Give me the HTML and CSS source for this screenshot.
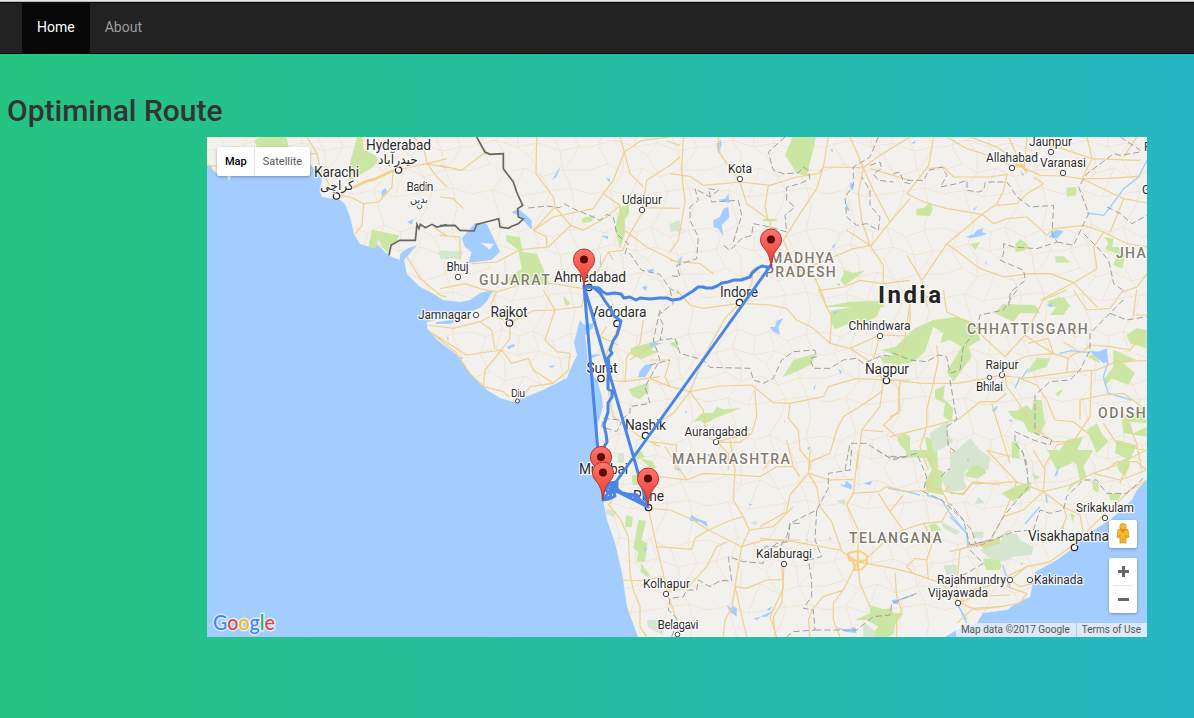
FILE: index.html
```html
<!DOCTYPE html>
<html lang="en">
<head>
<meta charset="utf-8">
<title>Optiminal Route</title>
<link rel="stylesheet" href="styles.css">
</head>
<body>
<nav class="navbar">
  <a class="nav-link active" href="#">Home</a>
  <a class="nav-link" href="#">About</a>
</nav>
<main class="content">
  <h2 class="title">Optiminal Route</h2>
  <div class="map">
    <svg class="map-canvas" viewBox="207 137 940 500" width="940" height="500">
      <defs>
        <pattern id="lanes" width="118" height="104" patternUnits="userSpaceOnUse">
          <path class="lane" d="M0 20L14 25 30 17 47 24 61 19 80 29 98 22 118 20M0 66L18 60 33 69 52 64 70 73 91 66 118 66M25 0L30 17 24 36 33 50 33 69 20 86 25 104M73 0L61 19 67 39 58 52 70 73 78 87 73 104M103 0L98 22 107 43 100 55 91 66 99 84 103 104M0 43L24 36 45 43 67 39 88 47 107 43 118 43M0 90L20 86 40 93 52 64M40 93L60 90 78 87 99 84 118 90M47 24L45 43 58 52 M80 29L88 47 91 66M14 25L8 42 18 60"/>
        </pattern>
        <linearGradient id="pinFill" x1="0" y1="0" x2="0" y2="1"><stop offset="0" stop-color="#ff766a"/><stop offset="1" stop-color="#e8392f"/></linearGradient>
        <g id="pin">
          <path d="M0 0C-1-10-3-14-7-19C-9.500-22-10.500-24-10.500-27.500A10.500 10.500 0 0 1 10.500-27.500C10.500-24 9.500-22 7-19C3-14 1-10 0 0Z" fill="url(#pinFill)" stroke="#b8322b" stroke-width="1"/>
          <circle cy="-27.500" r="4" fill="#590c08"/>
        </g>
        <path id="landShape" d="M207 137V165L215 172 227 176 229 181 231 176 270 170 300 168 310 164 315 170 322 177 320 192 322 197 334 199 340 200 345 204 350 217 354 234 360 244 370 247 378 245 387 254 392 257 400 260 406 253 417 245 411 252 404 260 407 274 420 287 432 293 443 300 460 302 470 300 480 293 493 290 487 301 480 308 467 313 450 315 437 320 427 322 427 328 437 340 457 355 470 373 487 390 500 398 513 402 523 398 543 390 567 378 570 370 577 355 574 343 578 327 580 320 584 325 593 323 593 328 585 335 587 350 588 367 597 380 602 397 603 407 598 423 597 437 598 460 603 500 607 520 615 543 622 573 627 607 638 637H945L960 628 977 623 983 613 1007 610 1017 603 1030 597 1033 583 1035 572 1057 560 1075 547 1083 537 1110 520 1132 500 1137 490 1147 479V137Z"/>
      </defs>
      <rect class="sea" x="207" y="137" width="940" height="500"/>
      <use href="#landShape" fill="#f2f1ed"/>
      <use href="#landShape" fill="url(#lanes)"/>

      <!-- Sindh and the Indus delta -->
      <g transform="translate(207 137) scale(.33333)">
        <path class="park" d="M142 12L160 0H238L245 30H150ZM450 0L468 0 467 35 505 55 515 70 495 92 430 130 420 112ZM495 278L575 295 570 318 545 325 545 350 525 330 515 305 505 335 484 330Z"/>
        <path class="park pale" d="M690 345H720V365L700 358Z"/>
        <path class="water" d="M525 160l12-6 3 12-16 14ZM600 255l20-8-6 16ZM184 38l22-4-8 10ZM0 90l12-6 6 20-14 2ZM580 350l20-15 30-10-20 18-22 28-10 5Z"/>
        <path class="road" d="M300 0L330 50 340 95 365 140 388 175 430 180 470 200 515 195 555 150 558 100M470 200L465 265 445 290M575 98L610 90 660 80 720 92M620 0L650 30 660 80 690 120 720 150M0 85L30 88M300 50L330 50M720 65L660 80M720 298L680 270M600 360L640 425 700 475 720 480"/>
        <path class="highway" d="M400 170L480 132 500 128 560 100"/>
        <path class="state-line dark" d="M720 263L690 270 675 262 655 272 640 262 636 275 630 262 625 310H578L552 325 546 355"/>
      </g>

      <!-- Gujarat north and Udaipur -->
      <g transform="translate(440 137) scale(.33333)">
        <path class="water" d="M65 305L105 258 140 260 180 345 155 368 85 378 95 345 75 330ZM235 215L275 250V278L240 240 215 225ZM335 130l28-45-14 34ZM245 362l15 15-8 12-10-14ZM484 298l20-2v10ZM498 122l12 4v12ZM605 450l18-4-6 16ZM620 398l22-2-6 14ZM481 345l4 50-6-16Z"/>
        <path class="land" d="M123 318l38 2-12 18Z"/>
        <path class="park" d="M198 295L240 300 248 345 290 350 330 442H180L245 395 235 340 200 312ZM425 244l42-10-14 20-26 4ZM540 210L567 205V230L555 245V290L540 335 525 275ZM370 480l20 20-12 8Z"/>
        <path class="park pale" d="M0 340L70 345 60 365H0ZM685 262L720 250V290Z"/>
        <path class="road" d="M290 0L288 110 340 180 345 210 392 265 325 330 240 338 170 375 95 380M0 295L60 300V370M0 85L65 100 130 50 178 50M0 180L40 185 70 215M345 210L280 280 320 300V330M392 265L430 280 500 240 540 205 490 170 460 215 340 240 280 280M540 0L553 45 520 130 490 170M553 45L605 10 690 0M720 60L690 85 620 130 608 212 720 214M540 205L548 275 620 330 720 380M448 450L475 400 505 345 548 340 570 290 608 225M430 455L340 440 250 440 170 465 150 510M553 45L570 110 610 150M720 25L680 12M0 455L75 440 120 455 170 465M520 370L505 345"/>
        <path class="state-line dark" d="M110 0L135 45 150 52 190 50V95L220 135 230 165 248 205 233 215 235 240 250 246 235 260 215 268 205 274 180 270 176 245 110 262 102 282 60 280 45 265 0 266"/>
        <path class="state-line" d="M265 213L320 207 360 212 372 200 400 215 460 240 480 250 500 232 520 240 530 290 540 300 565 320 555 350 570 350 605 400 660 412 690 455 720 470"/>
      </g>

      <!-- Kota and Madhya Pradesh -->
      <g transform="translate(670 137) scale(.33333)">
        <path class="park" d="M368 0H438L412 110 420 120 380 108 345 55ZM515 380L520 398 550 408 585 400 560 420 525 445 510 430 522 410ZM455 510L540 494 630 491 645 510ZM280 245l40 0v8h-40Z"/>
        <path class="park pale" d="M0 265L20 250 40 280 0 285Z"/>
        <path class="water" d="M130 250L150 240 160 215 175 210 178 240 155 265 160 298 145 275 130 270ZM143 188L165 186 175 170 178 198ZM140 20L152 8 155 24 145 50ZM526 192l14 30-10-3ZM540 138l10 2v18h-8ZM480 38l8-3v10ZM484 330l12-12-4 16ZM428 380l10 0-5 8ZM25 370l12-15-8 36ZM500 440l10 0-2 8Z"/>
        <path class="road" d="M40 0L35 105 45 195 25 310 0 345M0 110L60 118 100 145 160 140 210 135 300 145 380 120 445 110 460 90 580 92 630 55 720 0M145 0L150 50 210 135 230 200 300 250 303 300 340 310 380 395 430 415 455 465 470 510M475 0L460 90 440 155 390 230 340 310M295 145L285 210 295 250M540 0L580 92 565 170 575 250 600 325 640 385V440M580 92L610 160 660 255 720 185M660 255L605 325 550 335 430 385M600 325L530 280M600 95L720 130M0 370L90 380 130 410M215 495L245 440 250 395 300 385M435 420L450 460 520 450 570 430 640 440 720 430"/>
        <path class="state-line" d="M345 0L295 45 310 100 340 110 385 108 400 90 415 100 420 125 390 140 350 150 350 190 375 210 345 235 350 285 300 270 250 260 245 295 215 305 180 340 155 320M190 315L215 235 205 190 125 195 115 155 145 160 120 180 75 155 85 190 60 210 60 250 85 300 80 365 20 385 30 420 0 415M625 0L600 60 550 90 550 145 525 180 530 240 560 265 590 260 625 280 630 240 600 205V160L575 120M600 85L630 75 635 95 610 110 625 130 670 135M670 110L690 105 700 135 720 140"/>
      </g>

      <!-- Allahabad and Varanasi -->
      <g transform="translate(907 137) scale(.33333)">
        <path class="park" d="M28 215l22-2 20-18 8 22-10 20-40-2ZM478 152l30-2v25l-28 4ZM190 320l30-5-15 24ZM325 320l15-14 22 17-5 15-32 8ZM445 358l25 0 18 18-42 1ZM590 300L620 305 615 330 635 330 655 355 645 395 620 385 630 350 595 335 605 318ZM420 500L470 480 490 510H425ZM305 502L385 504 386 510H305Z"/>
        <path class="water" d="M175 300L200 292 210 280 230 272 225 285 240 290 220 298 190 303ZM425 300L445 278 470 282 450 305ZM340 100l12 14-6 2ZM235 368l5 16-4-4ZM196 218l16-12-8 12ZM12 18l16-8-6 10Z"/>
        <path class="river" d="M720 70L695 120 650 155 610 210 590 235 540 228"/>
        <path class="road" d="M120 0L180 35 260 60 315 88 345 90 400 115 468 117 520 125 590 125 700 118M80 0L65 85 0 170 50 195 120 215 225 232 260 260 300 245 360 240 420 295 440 275 530 265 590 285 660 320 720 330M225 232L180 270 120 320 45 430 60 510M120 320L220 395 290 420 370 410 430 410 500 437 570 395M570 395L560 330 590 285M500 437L400 490M65 95L110 90 140 120 250 120 300 112 290 160 270 200 225 232M270 205L330 200 360 170 410 140M190 0L270 30 350 85M305 0L340 80M395 0L420 20 555 65 700 70M540 0L555 65 525 125 650 185 720 198M650 185L610 285M650 60L690 0M360 0L352 90M0 355L45 430M500 437L570 510M645 465L690 450 720 410M380 120L410 140"/>
        <path class="highway" d="M325 82L345 88 360 103"/>
        <path class="state-line" d="M0 130L50 130 65 100 105 90 120 115 100 150 150 140 180 130 180 160 215 165 230 160 235 135 300 135 330 180 370 210 440 205 435 290 450 315 390 335 320 330 290 320 290 350 280 370 350 400 355 430 310 465 305 510M450 315L500 325 530 260 545 230 515 150 540 110 620 50 640 55 700 45M640 0L700 40M530 290L570 330 605 370 620 440 655 465M600 210L640 230 675 260 720 235"/>
      </g>

      <!-- Saurashtra and the Gulf of Khambhat -->
      <g transform="translate(400 290) scale(.33333)">
        <path class="water" d="M107 97L190 85 150 102H108ZM320 170l22-8 4 6-20 10ZM175 200l14 2-4 8ZM445 228l22-2-12 8ZM570 195L605 192 575 205ZM715 262L718 245 735 225 760 222 735 262ZM140 140l5 0v16Z"/>
        <path class="park" d="M490 18L510 40 495 45ZM692 175L770 152 750 180 775 185 725 208 695 195ZM685 298L745 278V305L718 328 700 320ZM690 490l30-10 15 20-20 8Z"/>
        <path class="park pale" d="M653 490H672V515H655Z"/>
        <path class="road" d="M80 105L160 115 240 95 280 75 330 100 330 145 305 180 200 195 90 125M240 95L275 120 285 175M250 290L255 240 305 180 335 220 385 205 400 240 460 280 505 240 510 190 470 185 435 150 465 60 400 62 330 100M465 60L545 50 555 5M430 0L465 60M90 125L170 190 210 250 250 290 310 305 325 318 370 318 390 290 460 280M600 265L625 270 675 275 780 260M675 275L680 200 720 160 730 90M660 100L620 190 620 270 632 345 640 380 720 440 780 470M620 110L600 140 655 165M780 150L690 210"/>
        <path class="state-line" d="M780 60L760 150 780 210 735 290 750 340 690 350 690 370 660 390 610 385 605 410 650 425 665 395"/>
      </g>

      <!-- Maharashtra and southern Madhya Pradesh -->
      <g transform="translate(650 290) scale(.33333)">
        <path class="park" d="M542 62L700 35 680 80 660 90 585 105 555 118 540 90ZM398 262L430 210 500 190 480 225 450 240ZM130 395L155 370 190 368 200 350 220 358 275 354 195 385 165 402 150 392ZM692 180L740 170 780 150V220H700L690 200 740 195ZM740 440L765 430 780 440V495L750 465ZM0 155L22 165 0 182ZM58 160L85 152V180Z"/>
        <path class="water" d="M360 112L375 110 380 92 400 85 385 112 390 135 370 125ZM565 238l10 4-3 12ZM490 295l8-12-4 16ZM550 65l18-2-14 10ZM470 474l14-6-8 12ZM170 492l20 0-4 18ZM402 388l3 12-3-4ZM104 362l8 4-5 4ZM0 160L40 158 0 172Z"/>
        <path class="road" d="M80 0L120 45 160 55 268 40 360 45 410 55 440 90 490 115 540 160 600 175 660 215 700 270 780 270M505 0L545 80 540 160M600 175L690 135 780 138M690 135L670 210M268 40L225 85 165 195 120 305 160 360 170 440 200 455 235 490V540M0 265L60 290 120 305 210 288 305 285 370 338 420 340 520 320 535 290 620 265 700 270M315 300L320 380 305 430 200 455M420 340L415 385 445 420 450 480 480 515 540 490 560 420 580 380 660 330 700 300M700 270L690 350 635 420 620 540M745 290L750 360 700 405 740 440M635 420L700 425M0 455L80 465 75 540M0 210L60 210 45 260 60 290M120 305L70 370 30 395M200 457L270 457 305 430M480 515V540M340 540L360 510 420 510M780 180V0"/>
        <path class="state-line" d="M60 0L70 40 25 75 40 105 30 150 75 145 90 190 160 210 180 232 300 235 310 270 340 280 370 265 395 210 430 185 495 180 500 200 480 205 490 235 540 235 580 210 620 205 640 220 700 195 780 210M0 225L60 210M585 540L600 460 650 460 720 505 780 500"/>
      </g>

      <!-- Chhattisgarh and Odisha -->
      <g transform="translate(890 290) scale(.33333)">
        <path class="park" d="M0 185L75 115 130 90 200 80 260 100 270 150 235 170 245 200 190 275 170 245 215 170 180 150 150 160 160 130 130 110 105 185 70 215 20 225ZM315 70L340 40 365 50 440 50 450 70 390 70 370 95ZM470 35L510 20 540 45 520 75 480 75 500 50ZM410 250L440 205 480 205 470 230ZM135 300L165 285 160 325 190 355 185 395 160 380 165 340 135 325ZM352 362L380 362 410 345 425 360 430 330 455 330 465 400 450 435 415 425 400 395 370 385ZM495 310L520 297 505 320ZM670 180L740 210 700 220 735 250 715 285 665 265 645 290 640 270 670 230ZM710 135L740 115 770 120V175L720 160ZM695 380L720 375 765 345 770 400 720 395 730 430 770 410V440L700 430ZM590 420L620 400 635 430 655 455 620 490ZM510 480L530 450 580 440 545 520 500 540 480 500ZM680 450L740 465 720 510 675 490ZM365 455L385 455 390 505 365 505ZM105 440L140 455 145 540 115 500ZM590 200l30-10 10 30Z"/>
        <path class="park pale" d="M120 430L180 390 170 430 190 455 130 490ZM180 490L200 480 240 445 270 480 300 500 295 540H200L235 500Z"/>
        <path class="water" d="M598 182L625 185 650 175 655 215 640 220ZM305 360l20-15-12 25ZM355 392l10-4v8ZM105 15l12 6 0 8ZM470 45l18-6-4 12Z"/>
        <path class="river" d="M508 190L545 182 600 188M655 215L640 260 655 310 725 330M390 260L375 295M415 235L395 265"/>
        <path class="road" d="M0 270L100 280 200 280 290 265 335 255 400 265 550 245 620 240 680 215 770 212M160 0L170 65 240 100 290 150 345 200 405 135 460 30 530 0M405 135L440 160 490 190 535 205 530 245M410 198L490 190M335 255L350 225 410 198M345 255L350 290 380 330 430 410 490 455 550 455 600 380 605 240M350 310L320 335 270 335 210 385 120 410 0 440M305 340L320 390 360 520M390 265L440 285 470 330 495 390 550 395 600 435M140 165L145 210 130 280 110 360V410L90 470 115 540M580 185L600 165 660 170 720 180 760 130M535 205L555 190 580 185M65 0L40 180 0 240M30 270L25 370 0 380M640 400L680 460 760 480M570 390L570 330 640 315 700 310 770 360M650 540L680 515 740 515 770 540M740 0L730 75 770 75M550 0L590 60 660 55 700 0M490 190L475 145 415 160M560 180L520 155M700 370L740 460 755 540M550 455L500 465 460 535M290 480L360 500"/>
        <path class="state-line" d="M380 0L340 60 270 75 260 120 220 170 210 240 180 250 170 200 145 195 110 215 60 210 0 185M180 270L190 330 200 390 170 410 175 470 235 510 200 540M700 30L650 80 600 130 600 180 570 240 540 270 480 275 435 315 435 430 485 450 480 465 430 450 375 425 375 460 400 490 410 540M660 70L710 90 770 80M0 500L90 500"/>
      </g>

      <!-- Konkan and northern Karnataka -->
      <g transform="translate(560 440) scale(.33333)">
        <path class="park" d="M198 225L218 230 215 262 195 262ZM235 240L258 242 245 300 262 310 255 365H230L235 335 220 325ZM243 368L268 405 262 412 242 395ZM215 105h18v30h-15ZM240 55l35 8 15 20-15 5Z"/>
        <path class="park pale" d="M175 42h16v26h-18ZM140 205l30 10-8 15-25-8ZM260 540l40 0 10 45-45-22ZM568 248l24-5-4 12Z"/>
        <path class="water" d="M388 238L395 225 410 235 440 245 443 262 420 245 390 242ZM500 495L512 505 520 498 530 505V530L510 515ZM580 535l22-5-10 10ZM620 508l18-10-10 14ZM345 82l20 6-12 4ZM565 190l14 4-10 3ZM250 325l12-3-6 14Z"/>
        <path class="road" d="M145 195L180 235 205 290 210 400 220 450 240 500V560L260 590M265 205L275 250 290 320 310 400 320 455 340 510 355 560M265 205L330 210 400 240 445 270 545 320 610 300 720 300M290 320L395 328 405 295 445 270 515 240 550 230 520 180 525 90 510 0M550 230L568 270 545 320 525 440 515 505 495 540 490 590M320 455L380 445 440 380 470 320 500 305M525 440L560 445 620 420 670 418 665 490 640 530 645 590M300 110L380 120 430 100 530 105 600 110 650 80 700 80M190 420L240 422 310 410M165 170L145 195 160 210M315 20L360 90 380 120M680 0L700 80 720 110M560 590L525 440M568 270L640 260 700 200M670 418L672 370"/>
        <path class="state-line" d="M335 590L355 540 325 510 330 475 370 470 380 450 410 450 415 420 450 440 480 422 515 422 505 350 550 365 610 370 615 320 660 320 680 290 690 250 720 250"/>
      </g>

      <!-- Telangana -->
      <g transform="translate(760 450) scale(.33333)">
        <path class="park" d="M435 0H500L530 30 525 55 550 65 545 110 550 135 500 125 495 95 515 60 500 25 440 20ZM615 70L650 50 680 70 640 85ZM505 225l20-5 20 20-30 5ZM285 510L330 490V465L370 478 395 475 400 490 430 490 405 525 400 550 385 560H330L355 530 320 510ZM660 285L720 260V330L690 320ZM670 340L710 325 720 360 680 360Z"/>
        <path class="park pale" d="M545 85L575 50 590 20 620 25 600 80 615 120 560 125ZM230 152l25-5 0 20ZM545 215L600 245 590 255 550 235ZM640 245h30l0 18h-28ZM655 140l20 20-30 2ZM310 515L340 540 350 560H310ZM550 345l40 0v30h-30Z"/>
        <path class="water" d="M240 103L255 105 258 92 275 105 275 118 250 110ZM310 100l28-8-8 14ZM225 530L260 540 285 530 290 550 255 545ZM205 260l8 4 0 8ZM135 268l8 0v6ZM0 500L40 482 20 500ZM395 450l20-2v14h-15ZM430 345l8 10Z"/>
        <path class="river" d="M385 115L440 125 480 135M500 135L545 150 570 190 620 250 625 290M400 455L460 435M590 460L615 500 620 525"/>
        <path class="road" d="M0 265L100 275 240 300 290 335 400 355 460 370 545 400 592 455M295 0L280 130 260 165 295 240 293 335 300 400 330 470M280 130L355 125 380 110 440 125 540 120 610 135 640 95 720 105M355 130L390 185 430 240 380 270 320 325M390 185L430 135M430 240L490 220 545 215 570 170 545 120 500 110 530 60 490 0M490 220L520 270 500 330 465 325 440 350 460 370M500 330L505 390M293 335L265 390 250 420 220 460V510L240 560M250 420L190 440 160 475 145 510 150 560M145 70L170 110 180 170 215 215 245 300M145 70L90 135 80 185 0 230M145 70L210 90 280 88M150 0L145 70M65 345L70 415 30 500 50 560M405 370L410 440 425 480 410 510V560M592 455L590 400 600 300 620 290 720 280M592 455L650 480 720 470M570 0L590 90 555 120"/>
        <path class="state-line" d="M275 0L270 60 205 70 205 115 170 180 90 220 85 275 50 280 0 320M170 180L165 270 185 320 145 330 155 390 155 440 130 475 160 480 165 540 100 545 80 560M165 540L230 540 290 540 340 500 390 495 395 460 470 430M350 0L400 30 470 10 500 80 490 125 545 150 600 200 635 240 650 290 700 270M545 80L560 60 620 40"/>
        <path class="highway thin" d="M263 310L295 302 320 315 322 340 305 358 285 360 280 335 268 330ZM263 320L293 335 320 330M293 305V358"/>
      </g>

      <!-- Andhra coast -->
      <g transform="translate(950 450) scale(.33333)">
        <path class="park" d="M45 75L65 48 85 45 110 65 85 85 50 80ZM155 130L195 110 245 95 240 120 190 155ZM500 40L535 20 540 45 525 80 505 60ZM425 90L445 100 445 130 430 120ZM350 130L370 105 390 95 410 80 400 50 430 0H370L345 10 380 45 390 90 360 105ZM100 325L150 330 155 355 110 360ZM475 130h40l-10 20-25 0ZM360 190l15 5-8 20ZM290 0h35l-5 45-15-25ZM245 70l25 10-15 10ZM330 235l12-10v20Z"/>
        <path class="park pale" d="M90 300L150 280 160 255 200 250 210 270 250 290 245 315 190 320 160 335 120 325ZM0 15L40 0H60L40 85 50 115 0 125Z"/>
        <path class="water" d="M312 80L328 45 322 75ZM286 135l5 0 2 25-4 0ZM210 342l8-4v6ZM164 365l8 20-4 4Z"/>
        <path class="river" d="M0 200L50 250 55 290M225 222L270 170M158 345L180 410M25 465L45 510"/>
        <path class="road" d="M0 130L40 130 65 100 120 100 200 95 280 125 340 170 390 195 400 250 370 285 300 335 230 350 180 375 110 410 60 420 25 460M280 125L360 105 430 70 500 45 590 0M280 125L285 60 250 0M280 125L220 180 160 200 120 275 60 290 0 305M200 95L110 0M430 70L510 90 590 60M590 90L540 120 500 160 465 190 420 235 370 290M230 350L180 390 170 410 230 430 210 460 150 470 70 475 20 520M200 95L160 200M25 460L70 440 180 435M530 45L510 100M180 240L150 260 120 275M340 170L350 200 330 250M180 390L210 410 250 400"/>
        <path class="state-line" d="M215 0L230 40 235 110 160 200 120 270 60 285 40 210 0 160M60 285L130 270 190 245 250 240 270 180 300 190 340 180 350 140 400 90 440 90 470 130 530 130 580 85M60 300L100 340 50 370 0 390"/>
      </g>

      <g class="places">
        <g class="dots">
          <circle cx="398.500" cy="170" r="3.200"/><circle cx="336.500" cy="196" r="3.200"/><circle cx="589" cy="287.500" r="3.200"/><circle cx="509.500" cy="323" r="3.200"/><circle cx="739.500" cy="302.500" r="3.200"/><circle cx="601" cy="378.500" r="3.200"/><circle cx="645.500" cy="435.500" r="3.200"/><circle cx="648.500" cy="507.500" r="3.200"/><circle cx="886.500" cy="380.500" r="3.200"/><circle cx="1074.500" cy="547.500" r="3.200"/><circle cx="617" cy="323.500" r="3.200"/>
          <g class="small"><circle cx="419.500" cy="206.500" r="2.200"/><circle cx="642" cy="210" r="2.700"/><circle cx="740" cy="179" r="2.700"/><circle cx="458" cy="277" r="2.700"/><circle cx="476" cy="315" r="2.700"/><circle cx="517.500" cy="401" r="2"/><circle cx="1051" cy="152" r="2.700"/><circle cx="1012" cy="168" r="2.700"/><circle cx="1063" cy="173" r="2.700"/><circle cx="880" cy="336" r="2.700"/><circle cx="1002" cy="375" r="2.700"/><circle cx="989.500" cy="377.500" r="2.200"/><circle cx="716" cy="442" r="2.700"/><circle cx="784" cy="564" r="2.700"/><circle cx="666" cy="594" r="2.700"/><circle cx="677.500" cy="634.500" r="2.300"/><circle cx="1105" cy="518" r="2.700"/><circle cx="1010" cy="580" r="2.700"/><circle cx="1030" cy="580" r="2.700"/><circle cx="958" cy="603" r="2.700"/></g>
        </g>
        <g class="city">
          <text x="398.500" y="150" textLength="65">Hyderabad</text><text class="urdu" x="398" y="163.500" textLength="40" lengthAdjust="spacingAndGlyphs">حيدرآباد</text>
          <text x="336.500" y="176.500" textLength="45">Karachi</text><text class="urdu" x="337" y="190" textLength="34" lengthAdjust="spacingAndGlyphs">کراچی</text>
          <text x="590" y="281.500" textLength="72">Ahmedabad</text><text x="509" y="317" textLength="37">Rajkot</text><text x="618" y="317" textLength="57">Vadodara</text><text x="739" y="297" textLength="38">Indore</text><text x="602" y="373" textLength="31">Surat</text><text x="645.500" y="430" textLength="41">Nashik</text><text x="603.500" y="473.500" textLength="49">Mumbai</text><text x="648.500" y="501" textLength="31">Pune</text><text x="887" y="374" textLength="44">Nagpur</text><text x="1068.500" y="541" textLength="81">Visakhapatna</text>
        </g>
        <g class="town">
          <text x="420" y="191" textLength="27">Badin</text><text class="urdu" x="419" y="202.500" textLength="18" lengthAdjust="spacingAndGlyphs">بدین</text>
          <text x="642" y="204" textLength="40">Udaipur</text><text x="740" y="173" textLength="24">Kota</text><text x="457.500" y="271" textLength="22">Bhuj</text><text x="444.500" y="319" textLength="53">Jamnagar</text><text class="village" x="518" y="396.500" textLength="14">Diu</text><text x="1050.500" y="146" textLength="43">Jaunpur</text><text x="1012" y="162" textLength="52">Allahabad</text><text x="1063" y="167" textLength="46">Varanasi</text><text x="1142" y="193.500" class="cut">G</text><text x="1144" y="151" class="cut">P</text><text x="879.500" y="330" textLength="62">Chhindwara</text><text x="1002" y="369" textLength="33">Raipur</text><text x="989.500" y="391" textLength="27">Bhilai</text><text x="716" y="436" textLength="63">Aurangabad</text><text x="784" y="558" textLength="56">Kalaburagi</text><text x="666.500" y="588" textLength="47">Kolhapur</text><text x="678" y="629" textLength="41">Belagavi</text><text x="1105" y="512" textLength="58">Srikakulam</text><text x="971.500" y="584" textLength="69">Rajahmundry</text><text x="1058.500" y="584" textLength="49">Kakinada</text><text x="958" y="597" textLength="60">Vijayawada</text>
        </g>
        <g class="region">
          <text x="479" y="285" textLength="72">GUJARAT</text><text x="770" y="262.500" textLength="65">MADHYA</text><text x="765" y="276.500" textLength="72">PRADESH</text><text x="967" y="334" textLength="122">CHHATTISGARH</text><text x="672" y="464" textLength="119">MAHARASHTRA</text><text x="849" y="543" textLength="94">TELANGANA</text><text x="1098" y="418" textLength="49">ODISH</text><text x="1116" y="258">JHA</text>
        </g>
        <text class="country" x="878" y="302.500" textLength="63">India</text>
      </g>

      <g class="route">
        <path d="M603 500L771 265M584 286L601 487M584 286L648 507M586 287L599 288 603 292 607 294 615 293 621 294 624 298 630 297 636 300 640 298 650 299 660 298 667 298 672 300 680 299 693 291 698 287 703 287 706 288 712 288 717 286 722 283 728 282 734 280 741 280 750 277 752 273 758 268 762 266 767 267 771 267M586 286L594 288 600 293 605 301 610 308 614 316 621 321 620 325 617 335 613 341 610 350 612 353 608 358 609 365 608 381 608 389 612 391 612 397 608 403 608 412 604 425 606 434 607 442 604 447 603 460 603 500M603 500L609 499 615 496 614 492 608 493 605 488 609 483 617 482 617 489 623 494 634 496 640 500 648 507M603 487L614 484 618 492 627 494 637 495 640 500 648 507M604 486L620 493 648 507M603 500L610 497 613 488"/>
      </g>
      <use href="#pin" x="584" y="287"/><use href="#pin" x="771" y="267"/><use href="#pin" x="601" y="484.500"/><use href="#pin" x="603" y="500"/><use href="#pin" x="648" y="506"/>

      <text class="google" x="213" y="630" textLength="62" lengthAdjust="spacingAndGlyphs"><tspan fill="#4285f4">G</tspan><tspan fill="#ea4335">o</tspan><tspan fill="#fbbc05">o</tspan><tspan fill="#4285f4">g</tspan><tspan fill="#34a853">l</tspan><tspan fill="#ea4335">e</tspan></text>
    </svg>
    <div class="map-type"><span class="type selected">Map</span><span class="type">Satellite</span></div>
    <div class="map-tools">
      <div class="street-view">
        <svg width="14" height="22" viewBox="0 0 14 22"><g stroke="#c58a20" stroke-width=".7"><path d="M2 7Q2 6 4 6H10Q12 6 12 7L13 14 11 15 10 12 10 20H7.600V15H6.400V20H4V12L3 15 1 14Z" fill="#fbb829"/><circle cx="7" cy="3.700" r="3.200" fill="#fbb829"/></g><path d="M4 6.500L7 10 10 6.500Z" fill="#ef7c22"/></svg>
      </div>
      <div class="zoom">
        <svg width="28" height="55" viewBox="0 0 28 55"><path d="M9 13.500H20M14.500 8V19M9 41.500H20" stroke="#666" stroke-width="3"/><path d="M4 27.500H23" stroke="#e6e6e6"/></svg>
      </div>
    </div>
    <div class="credits"><span class="credit">Map data ©2017 Google</span><span class="credit">Terms of Use</span></div>
  </div>
</main>
</body>
</html>
```
FILE: styles.css
```css
* { box-sizing: border-box; }
body {
  margin: 0;
  height: 718px;
  overflow: hidden;
  font-family: Roboto, "Liberation Sans", sans-serif;
  background: linear-gradient(to right, #25c481, #25b7c4);
}
.navbar {
  display: flex;
  height: 54px;
  padding-left: 22px;
  background: #222;
  border-top: 3px solid #080808;
  border-bottom: 1px solid #080808;
  border-image: linear-gradient(#e8e8e8 0 1px, #b9bdbb 1px 2px, #080808 2px) 3 0 1 0;
}
.nav-link {
  padding: 0 15px;
  font-size: 14px;
  line-height: 49px;
  color: #9d9d9d;
  text-decoration: none;
}
.nav-link.active { color: #fff; background: #080808; }
.content { padding: 40px 0 0 7px; }
.title {
  margin: 0 0 10px;
  font-size: 30px;
  font-weight: 500;
  line-height: 33px;
  color: #333;
}
.map {
  position: relative;
  width: 940px;
  height: 500px;
  margin-left: 200px;
  overflow: hidden;
}
.map-canvas { display: block; }
.sea, .water { fill: #a3ccff; }
.land { fill: #f2f1ed; }
.park { fill: #cbe6a3; }
.park.pale { fill: #d5e5cf; }
.lane { fill: none; stroke: #f0e3d0; stroke-width: .9; }
.road { fill: none; stroke: #edd190; stroke-width: 3.6; stroke-linejoin: round; }
.highway { fill: none; stroke: #f8ce80; stroke-width: 8; stroke-linejoin: round; }
.highway.thin { stroke-width: 6; }
.river { fill: none; stroke: #a3ccff; stroke-width: 4; }
.state-line { fill: none; stroke: #a0a0a0; stroke-width: 3; stroke-dasharray: 19 9; }
.state-line.dark { stroke: #666; stroke-width: 5; stroke-dasharray: none; }
.dots circle { fill: #fff; stroke: #222; stroke-width: 1.2; }
.dots .small circle { stroke: #444; stroke-width: 1; }
.places text {
  paint-order: stroke;
  stroke: rgba(255, 255, 255, .8);
  stroke-width: 2.6px;
  stroke-linejoin: round;
  fill: #2b2b2b;
}
.city text, .town text { text-anchor: middle; }
.city { font-size: 13.8px; }
.town { font-size: 12px; }
.town .cut { text-anchor: start; }
.town .village { font-size: 10.5px; }
.places .urdu { font-family: "DejaVu Sans", sans-serif; font-size: 13px; }
.town .urdu { font-size: 10px; }
.region { font-size: 14px; font-weight: 500; letter-spacing: 1.3px; }
.region text { fill: #817b6d; }
.places .country { font-size: 24px; font-weight: 700; fill: #222; }
.route path { fill: none; stroke: #4986e7; stroke-width: 3; stroke-linejoin: round; stroke-linecap: round; }
.google {
  font-family: Lato, sans-serif;
  font-size: 21px;
  font-weight: 500;
  paint-order: stroke;
  stroke: rgba(255, 255, 255, .65);
  stroke-width: 3px;
  stroke-linejoin: round;
}
.map-type {
  position: absolute;
  left: 10px;
  top: 10px;
  display: flex;
  height: 29px;
  border-radius: 2px;
  background: #fff;
  box-shadow: 0 1px 3px rgba(0, 0, 0, .3);
  font-size: 11px;
  line-height: 29px;
  color: #565656;
}
.type { padding: 0 8px; }
.type.selected { padding-right: 7px; border-right: 1px solid #e4e4e4; font-weight: 500; color: #000; }
.map-tools {
  position: absolute;
  right: 10px;
  bottom: 24px;
  display: flex;
  flex-direction: column;
  gap: 10px;
}
.street-view, .zoom {
  display: flex;
  width: 28px;
  border-radius: 2px;
  background: #fff;
  box-shadow: 0 1px 3px rgba(0, 0, 0, .3);
}
.street-view { height: 28px; align-items: center; justify-content: center; }
.zoom { height: 55px; }
.credits {
  position: absolute;
  right: 0;
  bottom: 0;
  display: flex;
  gap: 1px;
  font-size: 10px;
  line-height: 14px;
  color: #555;
}
.credit { padding: 0 6px 0 5px; background: rgba(245, 245, 245, .7); white-space: nowrap; }
```
